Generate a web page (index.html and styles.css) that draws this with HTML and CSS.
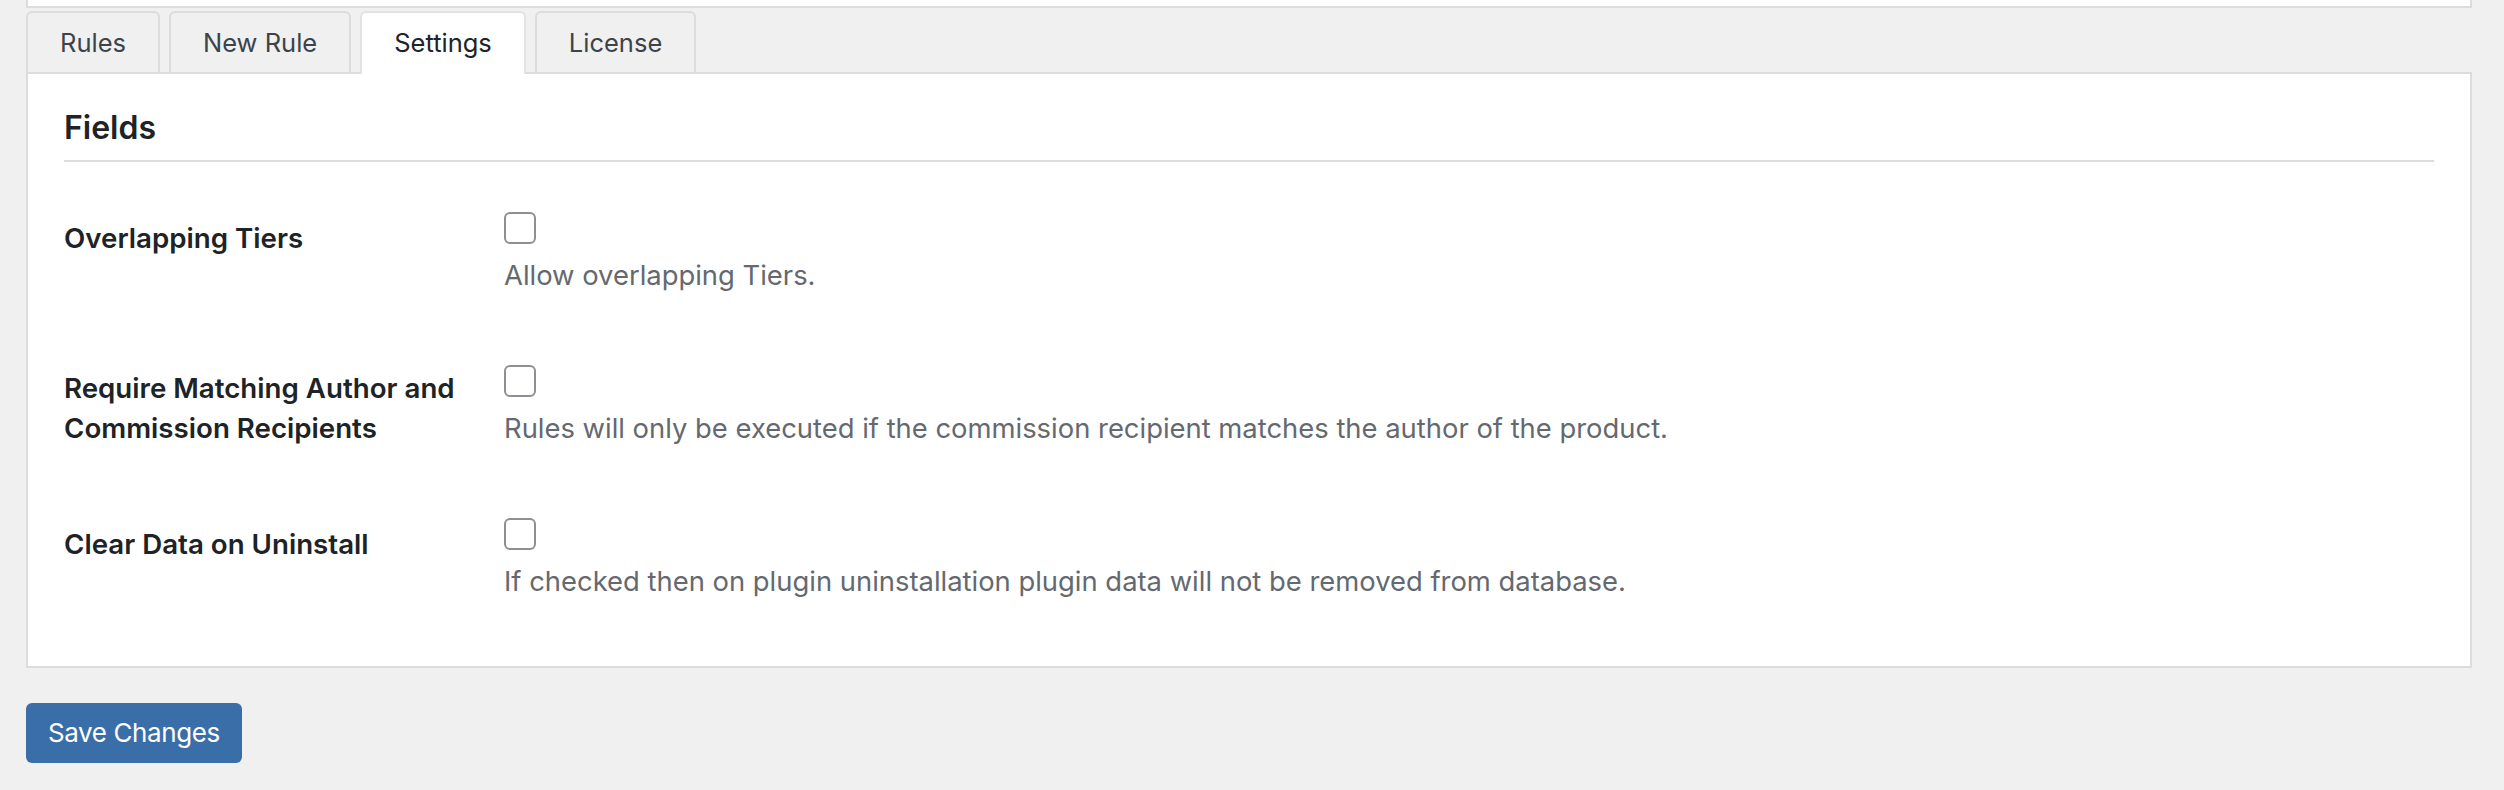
FILE: index.html
```html
<!DOCTYPE html>
<html lang="en">
<head>
<meta charset="utf-8">
<title>Settings</title>
<link rel="stylesheet" href="styles.css">
</head>
<body>
<div class="wrap">
  <div class="top-box"></div>
  <nav class="tabs">
    <a class="tab">Rules</a>
    <a class="tab">New Rule</a>
    <a class="tab tab-active">Settings</a>
    <a class="tab">License</a>
  </nav>
  <section class="panel">
    <h2 class="panel-title">Fields</h2>
    <div class="rows">
      <div class="row">
        <div class="row-label">Overlapping Tiers</div>
        <div class="row-field">
          <div class="check-wrap"><input type="checkbox" class="check"></div>
          <p class="description">Allow overlapping Tiers.</p>
        </div>
      </div>
      <div class="row">
        <div class="row-label row-label-tall">Require Matching Author and Commission Recipients</div>
        <div class="row-field">
          <div class="check-wrap"><input type="checkbox" class="check"></div>
          <p class="description">Rules will only be executed if the commission recipient matches the author of the product.</p>
        </div>
      </div>
      <div class="row">
        <div class="row-label">Clear Data on Uninstall</div>
        <div class="row-field">
          <div class="check-wrap"><input type="checkbox" class="check"></div>
          <p class="description">If checked then on plugin uninstallation plugin data will not be removed from database.</p>
        </div>
      </div>
    </div>
  </section>
  <button class="save-btn" type="button">Save Changes</button>
</div>
</body>
</html>
```

FILE: styles.css
```css
html, body {
  margin: 0;
  padding: 0;
}
body {
  background: #f0f0f1;
  font-family: Inter, "Noto Sans", "Liberation Sans", sans-serif;
  color: #1d2327;
  height: 790px;
  overflow: hidden;
}
.wrap {
  margin: 0 32px 0 26px;
}
.top-box {
  height: 6px;
  background: #ffffff;
  border: 2px solid #dcdcde;
  border-top: none;
}
.tabs {
  display: flex;
  align-items: flex-end;
  gap: 9px;
  margin-top: 3px;
  height: 61px;
}
.tab {
  display: block;
  box-sizing: border-box;
  height: 61px;
  padding: 0 32px;
  border: 2px solid #dcdcde;
  border-bottom: none;
  border-radius: 6px 6px 0 0;
  background: #f0f0f1;
  color: #3c434a;
  font-size: 25.5px;
  line-height: 59px;
  text-decoration: none;
  white-space: nowrap;
}
.tab-active {
  position: relative;
  z-index: 1;
  height: 63px;
  margin-bottom: -2px;
  background: #ffffff;
  color: #1d2327;
  border-color: #e2e2e4;
  line-height: 59px;
  padding-bottom: 2px;
}
.panel {
  background: #ffffff;
  border: 2px solid #dcdcde;
  padding: 34px 36px 25px;
}
.panel-title {
  margin: 0;
  font-size: 32px;
  font-weight: 600;
  line-height: 40px;
  color: #1d2327;
  padding-bottom: 12px;
  border-bottom: 2px solid #dcdcde;
}
.rows {
  padding-top: 20px;
}
.row {
  display: flex;
  height: 153px;
}
.row-label {
  box-sizing: border-box;
  flex: 0 0 440px;
  padding: 36px 30px 0 0;
  font-size: 27.7px;
  font-weight: 600;
  line-height: 40px;
  color: #1d2327;
}
.row-label-tall {
  padding-top: 33px;
}
.row-field {
  flex: 1;
  padding-top: 30px;
}
.check-wrap {
  height: 32px;
}
.check {
  -webkit-appearance: none;
  appearance: none;
  display: block;
  box-sizing: border-box;
  width: 32px;
  height: 32px;
  margin: 0;
  border: 2px solid #8c8f94;
  border-radius: 6px;
  background: #ffffff;
}
.description {
  margin: 11px 0 0;
  font-size: 27.4px;
  line-height: 40px;
  color: #646970;
}
.save-btn {
  display: block;
  margin-top: 35px;
  height: 60px;
  padding: 0 22px;
  border: none;
  border-radius: 6px;
  background: #3a6ea9;
  color: #ffffff;
  font-family: Inter, "Noto Sans", "Liberation Sans", sans-serif;
  font-size: 26px;
  letter-spacing: -0.4px;
  line-height: 60px;
}
```
